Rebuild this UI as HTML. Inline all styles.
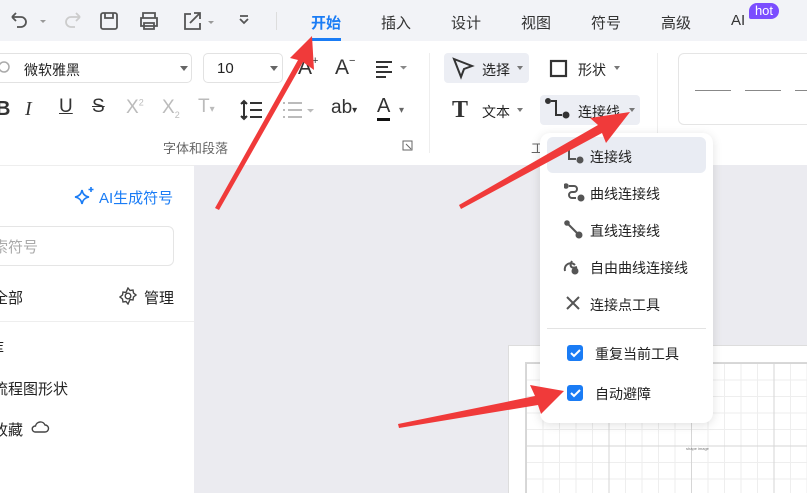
<!DOCTYPE html>
<html><head><meta charset="utf-8">
<style>
*{margin:0;padding:0;box-sizing:border-box}
body{width:807px;height:493px;overflow:hidden;position:relative;background:#ebebf0;font-family:"Liberation Sans","Noto Sans CJK SC",sans-serif;color:#222;font-size:14px}
.abs{position:absolute}
.top{left:0;top:0;width:807px;height:41px;background:#f2f3f7}
.tab{position:absolute;top:12px;font-size:15px;color:#333}
.tool{left:0;top:41px;width:807px;height:124px;background:#fff}
.left{left:0;top:165px;width:194px;height:328px;background:#fff;border-top:1px solid #eee}
.ico{position:absolute}
.menu{left:540px;top:133px;width:173px;height:290px;background:#fff;border-radius:10px;box-shadow:0 2px 10px rgba(0,0,0,.12)}
.mi{position:absolute;left:50px;font-size:14px;color:#222}
.cb{position:absolute;left:27px;width:16px;height:16px;background:#1a7cf5;border-radius:3px}
.page{left:508px;top:345px;width:299px;height:148px;background:#fff;border-left:1px solid #ddd;border-top:1px solid #ddd}
.grid{left:525px;top:362px;width:282px;height:131px;background-image:linear-gradient(#d6d6d6 1px,transparent 1px),linear-gradient(90deg,#d6d6d6 1px,transparent 1px),linear-gradient(#eeeeee 1px,transparent 1px),linear-gradient(90deg,#eeeeee 1px,transparent 1px);background-size:82.5px 82.5px,82.5px 82.5px,16.5px 16.5px,16.5px 16.5px;border-left:1px solid #d8d8d8;border-top:1px solid #d8d8d8}
</style></head><body>
<div class="abs top"></div>
<svg class="ico" style="left:8px;top:10px" width="250" height="22" viewBox="0 0 250 22" fill="none" stroke="#555" stroke-width="1.8">
<path d="M4 7h9a5 5 0 0 1 0 10h-4M4 7l4-4M4 7l4 4"/>
<path d="M32 10h6l-3 3z" fill="#999" stroke="none"/>
<path d="M72 7h-9a5 5 0 0 0 0 10h4M72 7l-4-4M72 7l-4 4" stroke="#ccc"/>
<rect x="93" y="3" width="16" height="16" rx="2"/><path d="M97 3v5h8V3"/>
<path d="M135 8V3h12v5M133 8h16v8h-16zM136 13h10v6h-10z"/>
<path d="M183 4h-6v15h15v-6M182 13l10-10M186 3h6v6"/>
<path d="M200 11h6l-3 3z" fill="#999" stroke="none"/>
<path d="M232 9l4 4 4-4M232 6h8"/>
</svg>
<div class="abs" style="left:276px;top:12px;width:1px;height:18px;background:#ddd"></div>
<div class="tab" style="left:311px;color:#1a7cf5;font-weight:bold">开始</div>
<div class="abs" style="left:311px;top:38px;width:30px;height:3px;background:#1a7cf5"></div>
<div class="tab" style="left:381px">插入</div>
<div class="tab" style="left:451px">设计</div>
<div class="tab" style="left:521px">视图</div>
<div class="tab" style="left:591px">符号</div>
<div class="tab" style="left:661px">高级</div>
<div class="tab" style="left:731px">AI</div>
<div class="abs" style="left:749px;top:3px;width:30px;height:16px;background:#7b4dff;border-radius:8px 8px 8px 2px;color:#fff;font-size:13px;text-align:center;line-height:15px">hot</div>

<div class="abs tool"></div>
<div class="abs" style="left:-6px;top:53px;width:198px;height:30px;border:1px solid #e2e2e2;border-radius:5px"></div>
<svg class="ico" style="left:0;top:60px" width="14" height="16"><circle cx="4" cy="7" r="5" fill="none" stroke="#aaa" stroke-width="1.5"/></svg>
<div class="abs" style="left:24px;top:60px;font-size:14px">微软雅黑</div>
<div class="abs" style="left:180px;top:66px;border:4px solid transparent;border-top:5px solid #666"></div>
<div class="abs" style="left:203px;top:53px;width:80px;height:30px;border:1px solid #e2e2e2;border-radius:5px"></div>
<div class="abs" style="left:217px;top:60px;font-size:15px">10</div>
<div class="abs" style="left:270px;top:66px;border:4px solid transparent;border-top:5px solid #666"></div>
<div class="abs" style="left:298px;top:55px;font-size:21px;color:#333">A<sup style="font-size:11px;vertical-align:10px">+</sup></div>
<div class="abs" style="left:335px;top:55px;font-size:21px;color:#333">A<sup style="font-size:11px;vertical-align:10px">−</sup></div>
<svg class="ico" style="left:374px;top:58px" width="36" height="20" stroke="#333" stroke-width="2"><path d="M2 4h16M2 9h12M2 14h16M2 19h10"/><path d="M26 8h7l-3.5 3.5z" fill="#888" stroke="none"/></svg>
<div class="abs" style="left:-4px;top:98px;font-size:20px;font-weight:bold;color:#333">B</div>
<div class="abs" style="left:25px;top:98px;font-size:20px;font-style:italic;font-family:'Liberation Serif';color:#333">I</div>
<div class="abs" style="left:59px;top:96px;font-size:19px;text-decoration:underline;color:#333">U</div>
<div class="abs" style="left:92px;top:96px;font-size:19px;text-decoration:line-through;color:#333">S</div>
<div class="abs" style="left:126px;top:97px;font-size:19px;color:#bbb">X<sup style="font-size:9px">2</sup></div>
<div class="abs" style="left:162px;top:97px;font-size:19px;color:#bbb">X<sub style="font-size:9px">2</sub></div>
<div class="abs" style="left:198px;top:96px;font-size:19px;color:#bbb">T<span style="font-size:10px">▾</span></div>
<svg class="ico" style="left:240px;top:99px" width="80" height="22" stroke="#333" stroke-width="2"><path d="M4 2v18M1 5l3-3 3 3M1 17l3 3 3-3M10 4h12M10 11h12M10 18h12"/><path d="M48 4h14M48 11h14M48 18h14M43 4h2M43 11h2M43 18h2" stroke="#bbb"/><path d="M67 10h7l-3.5 3.5z" fill="#bbb" stroke="none"/></svg>
<div class="abs" style="left:331px;top:97px;font-size:19px;color:#333">ab<span style="font-size:10px">▾</span></div>
<div class="abs" style="left:377px;top:96px;font-size:20px;color:#333;border-bottom:3px solid #111;line-height:20px;height:25px">A</div>
<div class="abs" style="left:399px;top:105px;font-size:10px;color:#666">▾</div>
<div class="abs" style="left:163px;top:138px;font-size:13px;color:#666">字体和段落</div>
<svg class="ico" style="left:402px;top:140px" width="11" height="11" stroke="#666" fill="none"><rect x="1" y="1" width="9" height="9"/><path d="M4 4l5 5"/></svg>
<div class="abs" style="left:429px;top:53px;width:1px;height:100px;background:#eee"></div>
<div class="abs" style="left:444px;top:53px;width:85px;height:30px;background:#eceef4;border-radius:4px"></div>
<svg class="ico" style="left:451px;top:56px" width="24" height="24" fill="none" stroke="#333" stroke-width="2"><path d="M3 3l18 7-8 3-3 8z"/></svg>
<div class="abs" style="left:482px;top:60px">选择</div>
<div class="abs" style="left:517px;top:66px;border:3px solid transparent;border-top:4px solid #777"></div>
<svg class="ico" style="left:549px;top:59px" width="20" height="20" fill="none" stroke="#333" stroke-width="2.2"><rect x="2" y="2" width="15" height="15"/></svg>
<div class="abs" style="left:578px;top:60px">形状</div>
<div class="abs" style="left:614px;top:66px;border:3px solid transparent;border-top:4px solid #777"></div>
<div class="abs" style="left:452px;top:98px;font-size:24px;font-family:'Liberation Serif';font-weight:bold;color:#333;line-height:24px">T</div>
<div class="abs" style="left:482px;top:102px">文本</div>
<div class="abs" style="left:517px;top:108px;border:3px solid transparent;border-top:4px solid #777"></div>
<div class="abs" style="left:540px;top:95px;width:100px;height:30px;background:#eceef4;border-radius:4px"></div>
<svg class="ico" style="left:545px;top:97px" width="26" height="24" fill="none" stroke="#333" stroke-width="2"><circle cx="3" cy="4" r="2" fill="#333"/><path d="M6 4h5v14h6"/><circle cx="21" cy="18" r="2.5" fill="#333"/></svg>
<div class="abs" style="left:578px;top:102px">连接线</div>
<div class="abs" style="left:629px;top:108px;border:3px solid transparent;border-top:4px solid #777"></div>
<div class="abs" style="left:531px;top:138px;font-size:13px;color:#666">工</div>
<div class="abs" style="left:657px;top:53px;width:1px;height:100px;background:#eee"></div>
<div class="abs" style="left:678px;top:53px;width:140px;height:72px;border:1px solid #e5e5e5;border-radius:6px"></div>
<div class="abs" style="left:695px;top:90px;width:36px;height:1px;background:#888"></div>
<div class="abs" style="left:745px;top:90px;width:36px;height:1px;background:#888"></div>
<div class="abs" style="left:795px;top:90px;width:20px;height:1px;background:#888"></div>

<div class="abs left"></div>
<svg class="ico" style="left:74px;top:186px" width="22" height="22" fill="none" stroke="#1a7cf5" stroke-width="1.6"><path d="M8 4q1 6 7 7q-6 1-7 7q-1-6-7-7q6-1 7-7z"/><path d="M17 1v5M14.5 3.5h5"/></svg>
<div class="abs" style="left:99px;top:187px;color:#1a7cf5;font-size:15px">AI生成符号</div>
<div class="abs" style="left:-10px;top:226px;width:184px;height:40px;border:1px solid #e5e5e5;border-radius:6px"></div>
<div class="abs" style="top:236px;color:#aaa;font-size:15px;left:-7px">索符号</div>
<div class="abs" style="left:-7px;top:287px;font-size:15px">全部</div>
<svg class="ico" style="left:119px;top:287px" width="18" height="18" fill="none" stroke="#444" stroke-width="1.4"><path d="M9 1l2 2.5 3-.5.5 3 2.5 2-2.5 2-.5 3-3-.5L9 17l-2-2.5-3 .5-.5-3L1 10l2.5-2 .5-3 3 .5z"/><circle cx="9" cy="9" r="2.8"/></svg>
<div class="abs" style="left:144px;top:287px;font-size:15px">管理</div>
<div class="abs" style="left:0;top:321px;width:194px;height:1px;background:#eee"></div>
<div class="abs" style="left:-11px;top:337px;font-size:15px">库</div>
<div class="abs" style="left:-7px;top:378px;font-size:15px">流程图形状</div>
<div class="abs" style="left:-7px;top:419px;font-size:15px">收藏</div>
<svg class="ico" style="left:30px;top:420px" width="20" height="14" fill="none" stroke="#444" stroke-width="1.4"><path d="M5 12h10a3.5 3.5 0 0 0 0-7 5 5 0 0 0-9.5 1A3 3 0 0 0 5 12z"/></svg>

<div class="abs page"></div>
<div class="abs grid"></div>
<div class="abs" style="left:686px;top:446px;font-size:4px;color:#777">shape image</div>

<div class="abs menu">
<div class="abs" style="left:7px;top:4px;width:159px;height:36px;background:#e9ecf3;border-radius:6px"></div>
<svg class="ico" style="left:24px;top:12px" width="22" height="20" fill="none" stroke="#555" stroke-width="2"><path d="M5 3v11h7"/><circle cx="16" cy="15" r="2.5" fill="#555"/></svg>
<div class="mi" style="top:14px">连接线</div>
<svg class="ico" style="left:24px;top:50px" width="22" height="20" fill="none" stroke="#555" stroke-width="2"><circle cx="2" cy="3" r="1.8" fill="#555"/><path d="M5 3h5a3 3 0 0 1 0 6h-2a3 3 0 0 0 0 6h4"/><circle cx="17" cy="15" r="2.5" fill="#555"/></svg>
<div class="mi" style="top:51px">曲线连接线</div>
<svg class="ico" style="left:24px;top:87px" width="22" height="20" fill="none" stroke="#555" stroke-width="2"><circle cx="3" cy="3" r="1.8" fill="#555"/><path d="M3 3l12 12"/><circle cx="15" cy="15" r="2.5" fill="#555"/></svg>
<div class="mi" style="top:88px">直线连接线</div>
<svg class="ico" style="left:22px;top:124px" width="24" height="20" fill="none" stroke="#555" stroke-width="2"><path d="M3 14a6 6 0 0 1 10-6M10 4c-3 5-1 8 5 6"/><circle cx="13" cy="14" r="2.5" fill="#555"/></svg>
<div class="mi" style="top:125px">自由曲线连接线</div>
<svg class="ico" style="left:24px;top:161px" width="20" height="20" fill="none" stroke="#555" stroke-width="2"><path d="M3 3l12 12M15 3L3 15"/></svg>
<div class="mi" style="top:162px">连接点工具</div>
<div class="abs" style="left:7px;top:195px;width:159px;height:1px;background:#e3e3e3"></div>
<div class="cb" style="top:212px"></div>
<svg class="ico" style="left:30px;top:215px" width="11" height="10" fill="none" stroke="#fff" stroke-width="2"><path d="M1 5l3 3 6-6"/></svg>
<div class="mi" style="left:55px;top:211px">重复当前工具</div>
<div class="cb" style="top:252px"></div>
<svg class="ico" style="left:30px;top:255px" width="11" height="10" fill="none" stroke="#fff" stroke-width="2"><path d="M1 5l3 3 6-6"/></svg>
<div class="mi" style="left:55px;top:251px">自动避障</div>
</div>

<svg class="ico" style="left:0;top:0" width="807" height="493">
<g fill="#f03a3a">
<polygon points="215,208 219,210 303,62 314,70 312,36 290,58 298,60"/>
<polygon points="459,205 461,209 602,133 606,143 630,112 590,118 598,125"/>
<polygon points="398,424 399,428 538,405 541,414 564,391 530,385 535,396"/>
</g>
</svg>
</body></html>
